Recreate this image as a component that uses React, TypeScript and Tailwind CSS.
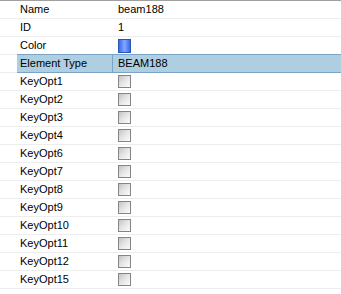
type Row = { label: string; kind: 'text' | 'color' | 'check'; value?: string; selected?: boolean }

const rows: Row[] = [
  { label: 'Name', kind: 'text', value: 'beam188' },
  { label: 'ID', kind: 'text', value: '1' },
  { label: 'Color', kind: 'color' },
  { label: 'Element Type', kind: 'text', value: 'BEAM188', selected: true },
  ...['1', '2', '3', '4', '6', '7', '8', '9', '10', '11', '12', '15'].map(
    (n): Row => ({ label: 'KeyOpt' + n, kind: 'check' })
  ),
]

function CheckBox() {
  return (
    <div className="w-[13px] h-[13px] border border-[#858585] bg-gradient-to-br from-[#c4c4c4] via-[#e6e6e6] to-[#fbfbfb]" />
  )
}

function ColorSwatch() {
  return (
    <div className="w-[13px] h-[14px] border border-[#2c55b8] bg-gradient-to-r from-[#3a6ae6] via-[#7fa6ff] to-[#3a6ae6]" />
  )
}

export default function App() {
  return (
    <div
      className="w-[341px] h-[294px] bg-white text-[11px] text-black border-t border-[#a0a0a0] overflow-hidden"
      style={{ fontFamily: '"Liberation Sans", Arial, sans-serif' }}
    >
      {rows.map((r) => (
        <div key={r.label} className="flex h-[18px] border-b border-[#ededed]">
          <div className="w-[17px] shrink-0" />
          <div
            className={
              r.selected
                ? 'flex flex-1 bg-[#adcfe1] border-t border-b border-[#7aa3c4] -mb-px -mt-px h-[19px]'
                : 'flex flex-1'
            }
          >
            <div
              className={
                r.selected
                  ? 'w-[96px] shrink-0 pl-[3px] flex items-center border-r border-[#7aa3c4]'
                  : 'w-[96px] shrink-0 pl-[3px] flex items-center'
              }
            >
              {r.label}
            </div>
            <div className="flex-1 pl-[5px] flex items-center">
              {r.kind === 'text' && <span>{r.value}</span>}
              {r.kind === 'color' && <ColorSwatch />}
              {r.kind === 'check' && <CheckBox />}
            </div>
          </div>
        </div>
      ))}
    </div>
  )
}
